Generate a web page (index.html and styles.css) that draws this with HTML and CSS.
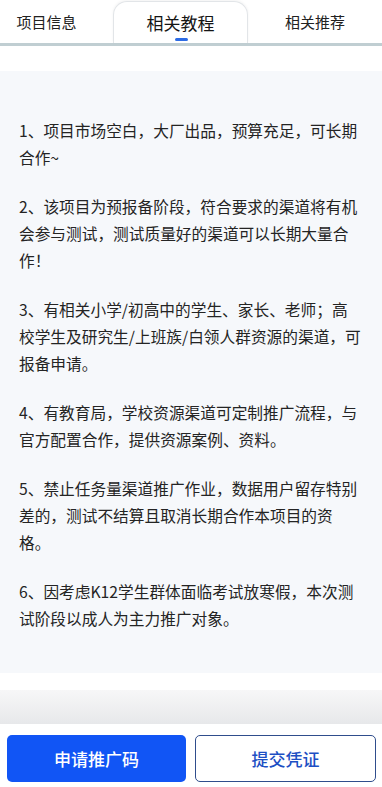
FILE: index.html
```html
<!DOCTYPE html>
<html lang="zh-CN">
<head>
<meta charset="utf-8">
<meta name="viewport" content="width=device-width, initial-scale=1">
<title>相关教程</title>
<link rel="stylesheet" href="styles.css">
</head>
<body>
<div class="page">
  <nav class="tabs">
    <div class="tab tab-first">项目信息</div>
    <div class="tab tab-active">相关教程<span class="indicator"></span></div>
    <div class="tab">相关推荐</div>
  </nav>
  <main class="content">
    <section class="card">
      <p>1、项目市场空白，大厂出品，预算充足，可长期合作~</p>
      <p>2、该项目为预报备阶段，符合要求的渠道将有机会参与测试，测试质量好的渠道可以长期大量合作！</p>
      <p>3、有相关小学/初高中的学生、家长、老师；高校学生及研究生/上班族/白领人群资源的渠道，可报备申请。</p>
      <p>4、有教育局，学校资源渠道可定制推广流程，与官方配置合作，提供资源案例、资料。</p>
      <p>5、禁止任务量渠道推广作业，数据用户留存特别差的，测试不结算且取消长期合作本项目的资格。</p>
      <p>6、因考虑K12学生群体面临考试放寒假，本次测试阶段以成人为主力推广对象。</p>
    </section>
  </main>
  <div class="band"></div>
  <footer class="footer">
    <button class="btn btn-primary" type="button">申请推广码</button>
    <button class="btn btn-outline" type="button">提交凭证</button>
  </footer>
</div>
</body>
</html>
```

FILE: styles.css
```css
* { box-sizing: border-box; }
html, body { margin: 0; padding: 0; background: #ffffff; }
body {
  font-family: "Noto Sans CJK SC", "Noto Sans", sans-serif;
  color: #222222;
}
.page {
  width: 382px;
  height: 787px;
  display: flex;
  flex-direction: column;
  overflow: hidden;
}
.tabs {
  display: grid;
  grid-template-columns: 113px 135px 1fr;
  height: 46px;
  border-bottom: 3px solid #c0ced2;
  background: #ffffff;
}
.tab {
  display: flex;
  align-items: center;
  justify-content: center;
  font-size: 15px;
  color: #222222;
  padding-bottom: 0;
  height: 43px;
}
.tab-first { padding-right: 20px; }
.tab-active {
  position: relative;
  margin-top: 1px;
  height: 42px;
  padding-bottom: 1px;
  font-size: 17px;
  color: #141414;
  border: 1px solid #e2e5e8;
  border-bottom: none;
  border-radius: 14px 14px 0 0;
  box-shadow: 0 -1px 3px rgba(0, 0, 0, 0.05);
}
.indicator {
  position: absolute;
  left: 61px;
  bottom: 2px;
  width: 13px;
  height: 3px;
  border-radius: 2px;
  background: #2d6be4;
}
.content {
  padding-top: 25px;
}
.card {
  background: #f6f8fb;
  height: 602px;
  padding: 46px 20px 0 19px;
}
.card p {
  margin: 0 0 22px 0;
  font-size: 15.7px;
  line-height: 27px;
  color: #242424;
}
.card p:last-child { margin-bottom: 0; }
.band {
  margin-top: 17px;
  height: 34px;
  background: linear-gradient(#f7f7f8, #e7e8ea);
}
.footer {
  display: flex;
  gap: 9px;
  padding: 11px 6px 0 7px;
  background: #ffffff;
}
.btn {
  flex: 1;
  height: 47px;
  border-radius: 5px;
  font-family: "Noto Sans CJK SC", "Noto Sans", sans-serif;
  font-size: 17px;
  font-weight: 500;
  cursor: pointer;
}
.btn-primary {
  background: #1155f5;
  color: #ffffff;
  border: none;
}
.btn-outline {
  background: #ffffff;
  color: #1d4fc4;
  border: 1.5px solid #2f4d8c;
}
```
